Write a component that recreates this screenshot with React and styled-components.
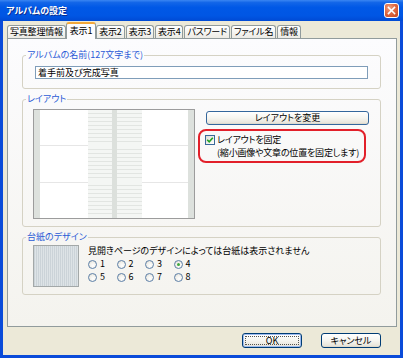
import React from "react";
import styled, { createGlobalStyle } from "styled-components";

const GlobalStyle = createGlobalStyle`
  html, body {
    margin: 0;
    padding: 0;
    background: #ffffff;
  }
  body {
    font-family: "Noto Sans CJK JP", "Liberation Sans", sans-serif;
    font-size: 9px;
    font-feature-settings: "palt";
    color: #000;
  }
  * {
    box-sizing: border-box;
  }
`;

const Window = styled.div`
    width: 403px;
    height: 358px;
    display: flex;
    flex-direction: column;
    background: #0a4bd9;
`;

const TitleBar = styled.div`
    height: 21px;
    flex: none;
    display: flex;
    align-items: center;
    justify-content: space-between;
    padding: 0 4px 0 6px;
    background: linear-gradient(to bottom, #3a86f2 0%, #1366e8 12%, #0058e6 35%, #0056e4 75%, #004ad4 100%);
`;

const Title = styled.span`
    color: #ffffff;
    font-weight: bold;
    font-size: 9px;
    line-height: 12px;
    text-shadow: 1px 1px 0 #0a2c90;
`;

const CloseButton = styled.div`
    width: 15px;
    height: 15px;
    border: 1px solid #ffffff;
    border-radius: 3px;
    background: radial-gradient(circle at 35% 30%, #f0a080 0%, #e06a44 45%, #c4421c 100%);
    display: flex;
    align-items: center;
    justify-content: center;
`;

const Body = styled.div`
    flex: 1;
    margin: 0 3px 3px 3px;
    background: #ece9d8;
    padding: 1px 3px 0 4px;
    display: flex;
    flex-direction: column;
`;

const TabRow = styled.div`
    display: flex;
    align-items: flex-end;
    height: 17px;
    margin-bottom: -1px;
    position: relative;
    z-index: 1;
`;

const Tab = styled.div`
    height: ${(p) => (p.$active ? "17px" : "13px")};
    margin: ${(p) => (p.$active ? "0 0 0 -1px" : "0 1px 1px 0")};
    padding: 0 ${(p) => (p.$active ? "3px" : "2px")};
    border: 1px solid #919b9c;
    border-bottom: none;
    border-top: ${(p) => (p.$active ? "2px solid #f2a83a" : "1px solid #919b9c")};
    border-radius: 3px 3px 0 0;
    background: ${(p) => (p.$active ? "#fcfcfe" : "linear-gradient(to bottom, #ffffff, #ecebe5)")};
    line-height: ${(p) => (p.$active ? "13px" : "12px")};
    letter-spacing: -0.2px;
    white-space: nowrap;
`;

const Panel = styled.div`
    flex: 1;
    border: 1px solid #919b9c;
    background: linear-gradient(to bottom, #fcfcfe, #f4f3ee);
    padding: 10px 15px 0 14px;
    display: flex;
    flex-direction: column;
    gap: 4px;
`;

const Group = styled.fieldset`
    margin: 0;
    padding: 0;
    min-width: 0;
    border: 1px solid #d5d2c4;
    border-radius: 3px;
`;

const Legend = styled.legend`
    margin-left: 3px;
    padding: 0 1px;
    color: #2a5ad6;
    font-size: 9px;
    line-height: 12px;
`;

const GroupBody = styled.div`
    padding: ${(p) => p.$pad};
    display: flex;
    gap: ${(p) => p.$gap || "0"};
`;

const NameInput = styled.input`
    display: block;
    width: 100%;
    height: 13px;
    margin: 0;
    padding: 0 2px;
    border: 1px solid #7f9db9;
    background: #ffffff;
    font: inherit;
    font-size: 9px;
    line-height: 11px;
    outline: none;
`;

const RightColumn = styled.div`
    margin-left: 3px;
    display: flex;
    flex-direction: column;
`;

const XpButton = styled.button`
    margin: 0;
    padding: 0;
    font: inherit;
    font-size: 9px;
    color: #000;
    line-height: 12px;
    border: 1px solid #35679c;
    border-radius: 3px;
    background: linear-gradient(to bottom, #ffffff 0%, #f6f5f0 50%, #e9e6dc 88%, #d9d4c6 100%);
`;

const WideButton = styled(XpButton)`
    width: 163px;
    height: 14px;
    margin: 2px 0 0 8px;
`;

const Highlight = styled.div`
    width: 168px;
    margin-top: 4px;
    border: 2px solid #e2202a;
    border-radius: 8px;
    padding: 2px 4px 2px 5px;
    display: flex;
    gap: 2px;
`;

const CheckBox = styled.div`
    width: 10px;
    height: 10px;
    flex: none;
    margin-top: 2px;
    border: 1px solid #3a6a9a;
    background: linear-gradient(135deg, #dcdcd6, #ffffff);
    display: flex;
    align-items: center;
    justify-content: center;
`;

const CheckText = styled.div`
    display: flex;
    flex-direction: column;
    line-height: 13px;
    white-space: nowrap;
    letter-spacing: -0.2px;
`;

const Swatch = styled.div`
    width: 46px;
    height: 42px;
    flex: none;
    border: 1px solid #a3a8a8;
    background: repeating-linear-gradient(to right, #cbd3d8 0, #cbd3d8 1px, #dde3e6 1px, #dde3e6 2px);
`;

const DesignInfo = styled.div`
    display: flex;
    flex-direction: column;
`;

const Note = styled.div`
    line-height: 11px;
    white-space: nowrap;
`;

const RadioGrid = styled.div`
    margin-top: 3px;
    display: grid;
    grid-template-columns: repeat(4, 28.5px);
    row-gap: 3px;
`;

const RadioItem = styled.div`
    display: flex;
    align-items: center;
    gap: 3px;
    height: 10px;
    line-height: 10px;
`;

const Radio = styled.span`
    width: 9px;
    height: 9px;
    flex: none;
    border-radius: 50%;
    border: 1px solid #5d80a8;
    background: radial-gradient(circle at 60% 65%, #ffffff 0%, #f2f1ec 50%, #d8d6cc 100%);
    display: flex;
    align-items: center;
    justify-content: center;

    &::after {
        content: "";
        width: 3px;
        height: 3px;
        border-radius: 50%;
        background: ${(p) => (p.$checked ? "#3fa83f" : "transparent")};
    }
`;

const Footer = styled.div`
    display: flex;
    justify-content: flex-end;
    gap: 19px;
    padding: 6px 16px 7px 0;
`;

const FooterButton = styled(XpButton)`
    width: 60px;
    height: 15px;
    border-color: #003c74;
    box-shadow: ${(p) => (p.$default ? "inset 0 0 0 1px #9ebcf0" : "none")};
    outline: ${(p) => (p.$default ? "1px dotted #555" : "none")};
    outline-offset: -4px;
`;

function LayoutPreview() {
    const lines = [];
    for (let y = 4; y < 108; y += 4) {
        if (y % 36 === 0) continue;
        lines.push(y);
    }
    return (
        <svg width="162" height="110" viewBox="0 0 162 110" style={{ flex: "none", display: "block" }}>
            <rect x="0.5" y="0.5" width="161" height="109" fill="#ffffff" stroke="#9c9c9c" />
            <rect x="1" y="1" width="6" height="108" fill="#dde1dd" />
            <rect x="155" y="1" width="6" height="108" fill="#dde1dd" />
            <line x1="7" y1="36.5" x2="155" y2="36.5" stroke="#e6e6e6" />
            <line x1="7" y1="73.5" x2="155" y2="73.5" stroke="#e6e6e6" />
            <rect x="55" y="1" width="24" height="108" fill="#f4f6f4" />
            <rect x="84" y="1" width="25" height="108" fill="#f4f6f4" />
            {lines.map((y) => (
                <g key={y}>
                    <line x1="55" y1={y + 0.5} x2="79" y2={y + 0.5} stroke="#e2e5e2" />
                    <line x1="84" y1={y + 0.5} x2="109" y2={y + 0.5} stroke="#e2e5e2" />
                </g>
            ))}
            <rect x="79" y="1" width="5" height="108" fill="#dce0dc" />
        </svg>
    );
}

const tabs = ["写真整理情報", "表示1", "表示2", "表示3", "表示4", "パスワード", "ファイル名", "情報"];

export default function App() {
    return (
        <>
            <GlobalStyle />
            <Window>
                <TitleBar>
                    <Title>アルバムの設定</Title>
                    <CloseButton>
                        <svg width="9" height="9" viewBox="0 0 9 9">
                            <path d="M1.5 1.5 L7.5 7.5 M7.5 1.5 L1.5 7.5" stroke="#ffffff" strokeWidth="1.6" strokeLinecap="square" />
                        </svg>
                    </CloseButton>
                </TitleBar>
                <Body>
                    <TabRow>
                        {tabs.map((t) => (
                            <Tab key={t} $active={t === "表示1"}>{t}</Tab>
                        ))}
                    </TabRow>
                    <Panel>
                        <Group>
                            <Legend>アルバムの名前(127文字まで)</Legend>
                            <GroupBody $pad="5px 12px 9px 12px">
                                <NameInput readOnly value="着手前及び完成写真" />
                            </GroupBody>
                        </Group>
                        <Group>
                            <Legend>レイアウト</Legend>
                            <GroupBody $pad="4px 0 7px 10px">
                                <LayoutPreview />
                                <RightColumn>
                                    <WideButton>レイアウトを変更</WideButton>
                                    <Highlight>
                                        <CheckBox>
                                            <svg width="8" height="8" viewBox="0 0 8 8">
                                                <path d="M1.2 3.8 L3.2 5.8 L6.8 1.8" fill="none" stroke="#21a121" strokeWidth="1.6" />
                                            </svg>
                                        </CheckBox>
                                        <CheckText>
                                            <span>レイアウトを固定</span>
                                            <span>(縮小画像や文章の位置を固定します)</span>
                                        </CheckText>
                                    </Highlight>
                                </RightColumn>
                            </GroupBody>
                        </Group>
                        <Group>
                            <Legend>台紙のデザイン</Legend>
                            <GroupBody $pad="2px 0 7px 10px" $gap="9px">
                                <Swatch />
                                <DesignInfo>
                                    <Note>見開きページのデザインによっては台紙は表示されません</Note>
                                    <RadioGrid>
                                        {[1, 2, 3, 4, 5, 6, 7, 8].map((n) => (
                                            <RadioItem key={n}>
                                                <Radio $checked={n === 4} />
                                                {n}
                                            </RadioItem>
                                        ))}
                                    </RadioGrid>
                                </DesignInfo>
                            </GroupBody>
                        </Group>
                    </Panel>
                    <Footer>
                        <FooterButton $default>OK</FooterButton>
                        <FooterButton>キャンセル</FooterButton>
                    </Footer>
                </Body>
            </Window>
        </>
    );
}
